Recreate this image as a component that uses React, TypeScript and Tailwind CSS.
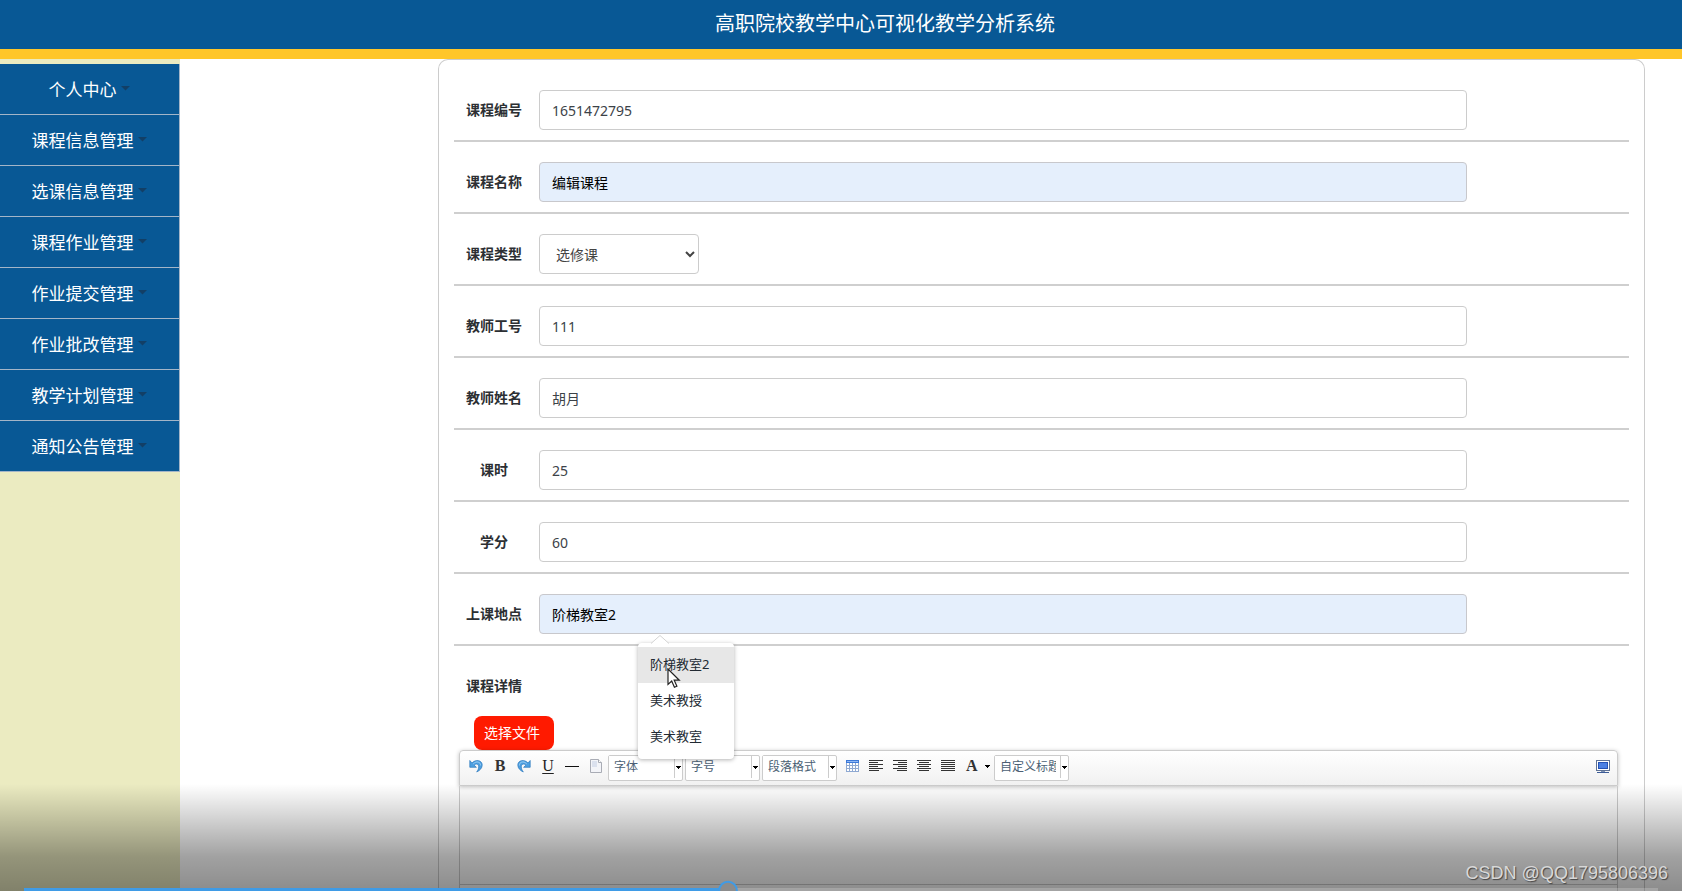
import React from "react";

const menuItems = [
  "个人中心",
  "课程信息管理",
  "选课信息管理",
  "课程作业管理",
  "作业提交管理",
  "作业批改管理",
  "教学计划管理",
  "通知公告管理",
];

type Field = {
  id: string;
  label: string;
  value: string;
  kind?: "text" | "filled" | "select";
};

const fields: Field[] = [
  { id: "course-no", label: "课程编号", value: "1651472795" },
  { id: "course-name", label: "课程名称", value: "编辑课程", kind: "filled" },
  { id: "course-type", label: "课程类型", value: "选修课", kind: "select" },
  { id: "teacher-no", label: "教师工号", value: "111" },
  { id: "teacher-name", label: "教师姓名", value: "胡月" },
  { id: "hours", label: "课时", value: "25" },
  { id: "credits", label: "学分", value: "60" },
  { id: "place", label: "上课地点", value: "阶梯教室2", kind: "filled" },
];

const suggestions = ["阶梯教室2", "美术教授", "美术教室"];

function MenuItem({ text }: { text: string }) {
  return (
    <li>
      <button
        type="button"
        className="flex h-[51px] w-full items-center justify-center gap-1 border-r border-b border-[#a3b5c8] bg-[#085895] pt-[2px] text-[17px] text-white"
      >
        <span>{text}</span>
        <svg width="9" height="5" viewBox="0 0 9 5" className="mr-px mb-1" aria-hidden="true">
          <path d="M0 0h9L4.500 4.500z" fill="#123f66" />
        </svg>
      </button>
    </li>
  );
}

function Suggestions() {
  return (
    <div className="absolute top-[49px] left-[99px] z-10 w-24 rounded bg-white py-1 text-[13px] text-[#222a33] shadow-[0_1px_4px_rgba(0,0,0,0.3)]">
      <svg width="18" height="9" viewBox="0 0 18 9" className="absolute -top-2 left-[13px]" aria-hidden="true">
        <path d="M0 9L9 .5L18 9z" fill="#fff" />
        <path d="M0 8.500L9 .5L18 8.500" fill="none" stroke="#d4d4d4" />
      </svg>
      <ul>
        {suggestions.map((s, i) => (
          <li key={s} className={i === 0 ? "bg-[#e7e7e7]" : "bg-white"}>
            <button type="button" className="flex h-9 w-full items-center px-3">
              {s}
            </button>
          </li>
        ))}
      </ul>
      <svg width="14" height="21" viewBox="0 0 14 21" className="absolute top-[25px] left-[29px]" aria-hidden="true">
        <path
          d="M1 1v15.500l3.700-3.400l2.700 6.200l2.500-1.100l-2.700-6h5.100z"
          fill="#fff"
          stroke="#222"
          strokeWidth="1.200"
        />
      </svg>
    </div>
  );
}

function FieldRow({ field }: { field: Field }) {
  return (
    <div className="flex border-b-2 border-[#cfcfcf] pt-5 pb-[10px]">
      <label
        htmlFor={field.id}
        className="mr-[5px] flex h-10 w-20 shrink-0 items-center justify-center text-sm font-bold text-[#2c2f33]"
      >
        {field.label}
      </label>
      {field.kind === "select" ? (
        <select
          id={field.id}
          defaultValue={field.value}
          className="h-10 w-40 rounded border border-[#ccc] bg-white px-3 text-sm text-[#444]"
        >
          <option>选修课</option>
          <option>必修课</option>
        </select>
      ) : (
        <div className="relative w-[79%]">
          <input
            id={field.id}
            type="text"
            defaultValue={field.value}
            className={
              field.kind === "filled"
                ? "h-10 w-full rounded border border-[#c8c8cc] bg-[#e5effc] px-3 text-sm text-black"
                : "h-10 w-full rounded border border-[#ccc] bg-white px-3 text-sm text-[#3c4248]"
            }
          />
          {field.id === "place" && <Suggestions />}
        </div>
      )}
    </div>
  );
}

function Caret() {
  return (
    <svg width="5" height="3" viewBox="0 0 5 3" aria-hidden="true" shapeRendering="crispEdges">
      <path d="M0 0h5v1H0zM1 1h3v1H1zM2 2h1v1H2z" fill="#000" />
    </svg>
  );
}

function ToolSelect({ text }: { text: string }) {
  return (
    <span className="mr-[2px] flex h-[26px] w-[75px] shrink-0 rounded-xs border border-[#ccc] bg-white">
      <select
        aria-label={text}
        className="h-[22px] w-[66px] appearance-none border-r border-[#ccc] bg-white pr-1 pl-[5px] text-xs text-[#4b5f74]"
      >
        <option>{text}</option>
      </select>
      <span className="flex h-[22px] flex-1 items-center justify-center">
        <Caret />
      </span>
    </span>
  );
}

function ToolButton({ label, children }: { label: string; children: React.ReactNode }) {
  return (
    <button type="button" aria-label={label} className="flex h-[22px] w-6 shrink-0 items-center justify-center">
      {children}
    </button>
  );
}

function UndoIcon({ flip = false }: { flip?: boolean }) {
  return (
    <svg width="14" height="14" viewBox="0 0 14 14" className={flip ? "-scale-x-100" : ""}>
      <path
        d="M.8 1.500V8.300H7.400L5.200 6.200C7 4.200 9.700 5 9.700 7.800c0 2-.9 3.500-2 5.200C11 11.500 13.200 9 13.200 6C13.200 1.300 6.800-.2 3 4z"
        fill="#4d9fe0"
        stroke="#2c79bd"
        strokeWidth=".7"
      />
      <path d="M4.300 4.800C7.500 1.500 11.700 3 11.700 6.500" fill="none" stroke="#9bd0f7" />
    </svg>
  );
}

function AlignIcon({ rows }: { rows: [number, number][] }) {
  return (
    <svg width="14" height="12" viewBox="0 0 14 12" shapeRendering="crispEdges">
      {rows.map(([x, w], i) => (
        <rect key={i} x={x} y={i * 2} width={w} height="1" fill="#333" />
      ))}
    </svg>
  );
}

const leftRows: [number, number][] = [[0, 14], [0, 9], [0, 14], [0, 9], [0, 14], [0, 10]];
const rightRows: [number, number][] = [[0, 14], [5, 9], [0, 14], [5, 9], [0, 14], [4, 10]];
const centerRows: [number, number][] = [[0, 14], [2, 10], [0, 14], [2, 10], [0, 14], [2, 10]];
const fullRows: [number, number][] = [[0, 14], [0, 14], [0, 14], [0, 14], [0, 14], [0, 14]];

function Toolbar() {
  return (
    <div className="flex h-9 items-start rounded-t border border-[#ccc] bg-linear-to-b from-white to-[#f1f1f1] pt-1 pr-[2px] pl-1 shadow-[0_1px_4px_rgba(0,0,0,0.25)]">
      <ToolButton label="撤销"><UndoIcon /></ToolButton>
      <ToolButton label="加粗">
        <span className="font-['Liberation_Serif',serif] text-base font-bold text-[#333]">B</span>
      </ToolButton>
      <ToolButton label="重做"><UndoIcon flip /></ToolButton>
      <ToolButton label="下划线">
        <span className="font-['Liberation_Serif',serif] text-base text-[#222] underline underline-offset-2">U</span>
      </ToolButton>
      <ToolButton label="分隔线">
        <svg width="14" height="1" viewBox="0 0 14 1"><path d="M0 .5h14" stroke="#111" /></svg>
      </ToolButton>
      <ToolButton label="清空文档">
        <svg width="12" height="14" viewBox="0 0 12 14">
          <path d="M.5.5h8l3 3v10H.5z" fill="#f3f4f8" stroke="#a9acb5" />
          <path d="M8.500.5v3h3" fill="#fff" stroke="#a9acb5" />
          <path d="M2 2h5v6H2z" fill="#dbe1ee" />
        </svg>
      </ToolButton>
      <ToolSelect text="字体" />
      <ToolSelect text="字号" />
      <ToolSelect text="段落格式" />
      <div className="flex pl-px">
        <ToolButton label="表格">
          <svg width="13" height="12" viewBox="0 0 13 12" shapeRendering="crispEdges">
            <path d="M0 0h13v12H0z" fill="#8fa9d2" />
            <path d="M0 0h13v3H0z" fill="#3b78d8" />
            <path d="M1 1h11v1H1z" fill="#8fb8f5" />
            <path d="M1 3h2v2H1zM4 3h2v2H4zM7 3h2v2H7zM10 3h2v2h-2zM1 6h2v2H1zM4 6h2v2H4zM7 6h2v2H7zM10 6h2v2h-2zM1 9h2v2H1zM4 9h2v2H4zM7 9h2v2H7zM10 9h2v2h-2z" fill="#fff" />
          </svg>
        </ToolButton>
        <ToolButton label="居左对齐"><AlignIcon rows={leftRows} /></ToolButton>
        <ToolButton label="居右对齐"><AlignIcon rows={rightRows} /></ToolButton>
        <ToolButton label="居中对齐"><AlignIcon rows={centerRows} /></ToolButton>
        <ToolButton label="两端对齐"><AlignIcon rows={fullRows} /></ToolButton>
        <button type="button" aria-label="字体颜色" className="flex h-[22px] w-[34px] shrink-0 items-center gap-[7px] pl-[6px]">
          <span className="font-['Liberation_Serif',serif] text-base font-bold text-[#333]">A</span>
          <Caret />
        </button>
      </div>
      <ToolSelect text="自定义标题" />
      <span className="flex-1" />
      <ToolButton label="全屏预览">
        <svg width="14" height="13" viewBox="0 0 14 13" shapeRendering="crispEdges">
          <path d="M0 0h14v11H0z" fill="#5f7396" />
          <path d="M1 1h12v9H1z" fill="#fff" />
          <path d="M2 2h10v7H2z" fill="#2553b5" />
          <path d="M3 3h8v5H3z" fill="#4b80e4" />
          <path d="M5 11h4v1H5z" fill="#7f93b5" />
          <path d="M1 12h12v1H1z" fill="#3c5c97" />
        </svg>
      </ToolButton>
    </div>
  );
}

function VideoControls() {
  return (
    <div className="pointer-events-none absolute inset-x-0 bottom-0 h-[107px] bg-[linear-gradient(to_bottom,rgba(0,0,0,0),rgba(0,0,0,0.37)_68%,rgba(0,0,0,0.45))]">
      <div className="absolute inset-x-6 bottom-0 h-[3px] bg-white/20">
        <div className="h-full w-[43%] bg-[#3f9be6]" />
      </div>
      <svg width="20" height="11" viewBox="0 0 20 11" className="absolute bottom-0 left-[718px]" aria-hidden="true">
        <circle cx="10" cy="10.500" r="8.800" fill="#8c8c8c" stroke="#3f9be6" strokeWidth="2" />
      </svg>
      <p className="absolute right-[14px] bottom-1 font-['Liberation_Sans',sans-serif] text-lg text-[#d8d8d8] [text-shadow:1px_1px_1px_#444]">
        CSDN @QQ1795806396
      </p>
    </div>
  );
}

export default function App() {
  return (
    <div className="relative flex h-screen flex-col overflow-hidden bg-white font-['Noto_Sans','Noto_Sans_CJK_SC',sans-serif]">
      <header className="flex h-[59px] shrink-0 items-center justify-center border-b-[10px] border-[#ffc629] bg-[#085895] pb-[2px] pl-[88px]">
        <h1 className="text-xl text-white">高职院校教学中心可视化教学分析系统</h1>
      </header>
      <div className="flex min-h-0 flex-1">
        <nav className="w-[180px] shrink-0 bg-[#ebebc1] pt-[5px]">
          <ul>
            {menuItems.map((text) => (
              <MenuItem key={text} text={text} />
            ))}
          </ul>
        </nav>
        <main className="mr-[37px] ml-[258px] min-w-0 flex-1">
          <form className="flex h-full flex-col rounded-t-[10px] border border-b-0 border-[#ccc] px-[15px] pt-[10px]">
            {fields.map((field) => (
              <FieldRow key={field.id} field={field} />
            ))}
            <div className="flex flex-1 flex-col pt-5">
              <div className="flex h-10 w-20 shrink-0 items-center justify-center text-sm font-bold text-[#2c2f33]">
                课程详情
              </div>
              <div className="flex h-11 shrink-0 items-end pl-5">
                <button type="button" className="h-[34px] w-20 rounded-lg bg-[#ff1a00] pl-[10px] text-left text-sm text-white">
                  选择文件
                </button>
              </div>
              <div className="mr-[11px] ml-[5px] flex flex-1 flex-col">
                <Toolbar />
                <textarea
                  aria-label="课程详情"
                  className="block min-h-0 flex-1 resize-none border-x border-b border-[#ccc]"
                />
                <div className="h-[6px] border-x border-[#ccc]" />
              </div>
            </div>
          </form>
        </main>
      </div>
      <VideoControls />
    </div>
  );
}
